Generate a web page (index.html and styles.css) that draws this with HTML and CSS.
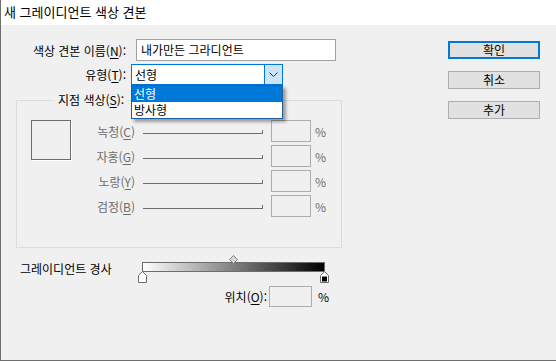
FILE: index.html
```html
<!DOCTYPE html>
<html lang="ko">
<head>
    <meta charset="UTF-8">
    <title>새 그레이디언트 색상 견본</title>
    <link rel="stylesheet" href="styles.css">
</head>
<body>
    <div class="window">
        <div class="titlebar">새 그레이디언트 색상 견본</div>

        <div class="content">
            <div class="form">
                <!-- Name -->
                <div class="row name-row">
                    <div class="label">색상 견본 이름(<u>N</u>):</div>
                    <div class="field name-field">내가만든 그라디언트</div>
                </div>

                <!-- Type -->
                <div class="row type-row">
                    <div class="label type-label">유형(<u>T</u>):</div>
                    <div class="select">
                        <span class="select-value">선형</span>
                        <span class="select-arrow">
                            <svg width="9" height="6" viewBox="0 0 9 6"><path d="M0.5 0.5 L4.5 4.5 L8.5 0.5" fill="none" stroke="#333" stroke-width="1"/></svg>
                        </span>
                        <ul class="dropdown">
                            <li class="selected">선형</li>
                            <li>방사형</li>
                        </ul>
                    </div>
                </div>

                <!-- Stop colour -->
                <fieldset class="group">
                    <legend>지점 색상(<u>S</u>):</legend>
                    <div class="group-inner">
                        <div class="swatch"></div>
                        <div class="sliders">
                            <div class="slider-row">
                                <div class="slider-label">녹청(<u>C</u>)</div>
                                <div class="slider-line"></div>
                                <div class="num-box"></div>
                                <div class="pct">%</div>
                            </div>
                            <div class="slider-row">
                                <div class="slider-label">자홍(<u>G</u>)</div>
                                <div class="slider-line"></div>
                                <div class="num-box"></div>
                                <div class="pct">%</div>
                            </div>
                            <div class="slider-row">
                                <div class="slider-label">노랑(<u>Y</u>)</div>
                                <div class="slider-line"></div>
                                <div class="num-box"></div>
                                <div class="pct">%</div>
                            </div>
                            <div class="slider-row">
                                <div class="slider-label">검정(<u>B</u>)</div>
                                <div class="slider-line"></div>
                                <div class="num-box"></div>
                                <div class="pct">%</div>
                            </div>
                        </div>
                    </div>
                </fieldset>

                <!-- Gradient ramp -->
                <div class="ramp-row">
                    <div class="ramp-label">그레이디언트 경사</div>
                    <div class="ramp">
                        <svg class="midpoint" width="9" height="9" viewBox="0 0 9 9"><path d="M4.5 0.5 L8.5 4.5 L4.5 8.5 L0.5 4.5 Z" fill="#d8d8d8" stroke="#808080"/></svg>
                        <div class="ramp-bar"></div>
                        <svg class="stop stop-left" width="9" height="12" viewBox="0 0 9 12"><path d="M4.5 0.5 L8.5 4.5 L8.5 11.5 L0.5 11.5 L0.5 4.5 Z" fill="#fff" stroke="#6d6d6d"/></svg>
                        <svg class="stop stop-right" width="9" height="12" viewBox="0 0 9 12"><path d="M4.5 0.5 L8.5 4.5 L8.5 11.5 L0.5 11.5 L0.5 4.5 Z" fill="#fff" stroke="#6d6d6d"/><rect x="2" y="5.5" width="5" height="5" fill="#000"/></svg>
                    </div>
                </div>

                <!-- Position -->
                <div class="pos-row">
                    <div class="pos-label">위치(<u>O</u>):</div>
                    <div class="num-box pos-box"></div>
                    <div class="pos-pct">%</div>
                </div>
            </div>

            <div class="buttons">
                <div class="btn btn-default">확인</div>
                <div class="btn">취소</div>
                <div class="btn">추가</div>
            </div>
        </div>
    </div>
</body>
</html>
```

FILE: styles.css
```css
body {
    margin: 0;
    font-family: "Noto Sans CJK KR", "Noto Sans", sans-serif;
    font-size: 12px;
    color: #000;
    background: #fff;
}
.window {
    width: 556px;
    height: 361px;
    box-sizing: border-box;
    border-left: 1px solid #6e6e6e;
    border-bottom: 1px solid #6e6e6e;
    background: #f0f0f0;
}
.titlebar {
    height: 25px;
    line-height: 24px;
    padding-left: 3px;
    background: #fff;
    font-size: 13px;
}
.content {
    display: flex;
    padding-top: 14px;
}
.form {
    width: 341px;
}
u {
    text-decoration: underline;
    text-underline-offset: 2px;
}

/* rows */
.row {
    display: flex;
    align-items: center;
}
.label {
    width: 125px;
    text-align: right;
    margin-right: 10px;
    white-space: nowrap;
}
.name-row {
    height: 22px;
}
.field {
    box-sizing: border-box;
    height: 22px;
    line-height: 20px;
    border: 1px solid #a0a0a0;
    background: #fff;
    padding-left: 4px;
}
.name-field {
    width: 200px;
}
.type-row {
    height: 21px;
    margin-top: 3px;
}
.type-label {
    margin-right: 5px;
}
.select {
    position: relative;
    box-sizing: border-box;
    width: 152px;
    height: 21px;
    border: 1px solid #0078d7;
    background: #fff;
    display: flex;
}
.select-value {
    flex: 1;
    line-height: 19px;
    padding-left: 3px;
}
.select-arrow {
    width: 17px;
    background: #cce4f7;
    border-left: 1px solid #0078d7;
    display: flex;
    align-items: center;
    justify-content: center;
}
.dropdown {
    position: absolute;
    left: -1px;
    top: 20px;
    width: 152px;
    box-sizing: border-box;
    margin: 0;
    padding: 0;
    list-style: none;
    background: #fff;
    border: 1px solid #1f5f9f;
    box-shadow: 3px 3px 3px rgba(0, 0, 0, 0.35);
    z-index: 5;
}
.dropdown li {
    height: 16px;
    line-height: 16px;
    padding-left: 2px;
}
.dropdown li.selected {
    background: #0078d7;
    color: #fff;
}

/* group box */
.group {
    margin: 7px 0 0 15px;
    padding: 0;
    width: 326px;
    box-sizing: border-box;
    border: 1px solid #dcdcdc;
    min-width: 0;
}
.group legend {
    margin-left: 38px;
    padding: 0 3px;
    line-height: 16px;
}
.group-inner {
    display: flex;
    padding: 12px 0 30px 14px;
}
.swatch {
    width: 38px;
    height: 38px;
    border: 1px solid #6d6d6d;
    box-shadow: 1px 1px 0 #fff;
}
.sliders {
    display: flex;
    flex-direction: column;
    gap: 3px;
}
.slider-row {
    display: flex;
    align-items: center;
    height: 22px;
    color: #6d6d6d;
}
.slider-label {
    width: 64px;
    text-align: right;
    margin-right: 8px;
}
.slider-line {
    width: 119px;
    height: 3px;
    border-bottom: 1px solid #6d6d6d;
    border-right: 1px solid #6d6d6d;
    margin-right: 8px;
    margin-top: 1px;
}
.num-box {
    box-sizing: border-box;
    width: 40px;
    height: 22px;
    border: 1px solid #adadad;
}
.pct {
    margin-left: 4px;
}

/* gradient ramp */
.ramp-row {
    display: flex;
    align-items: flex-start;
    margin-top: 7px;
}
.ramp-label {
    margin-left: 19px;
    width: 122px;
    padding-top: 6px;
    line-height: 16px;
}
.ramp {
    position: relative;
    padding-top: 7px;
    padding-bottom: 12px;
}
.ramp-bar {
    width: 183px;
    height: 10px;
    box-sizing: border-box;
    border: 1px solid #6d6d6d;
    background: linear-gradient(to right, #fff, #000);
}
.midpoint {
    position: absolute;
    left: 87px;
    top: 0;
}
.stop {
    position: absolute;
    top: 16px;
}
.stop-left {
    left: -4px;
}
.stop-right {
    left: 178px;
}

/* position */
.pos-row {
    display: flex;
    align-items: center;
    height: 21px;
    margin-top: 2px;
}
.pos-label {
    width: 266px;
    text-align: right;
    margin-right: 2px;
}
.pos-box {
    width: 43px;
    height: 21px;
}
.pos-pct {
    margin-left: 6px;
}

/* buttons */
.buttons {
    margin-left: 106px;
    margin-top: 2px;
    display: flex;
    flex-direction: column;
    gap: 12px;
}
.btn {
    box-sizing: border-box;
    width: 92px;
    height: 18px;
    line-height: 16px;
    text-align: center;
    background: #e1e1e1;
    border: 1px solid #adadad;
}
.btn-default {
    border: 2px solid #0078d7;
    line-height: 14px;
}
```
